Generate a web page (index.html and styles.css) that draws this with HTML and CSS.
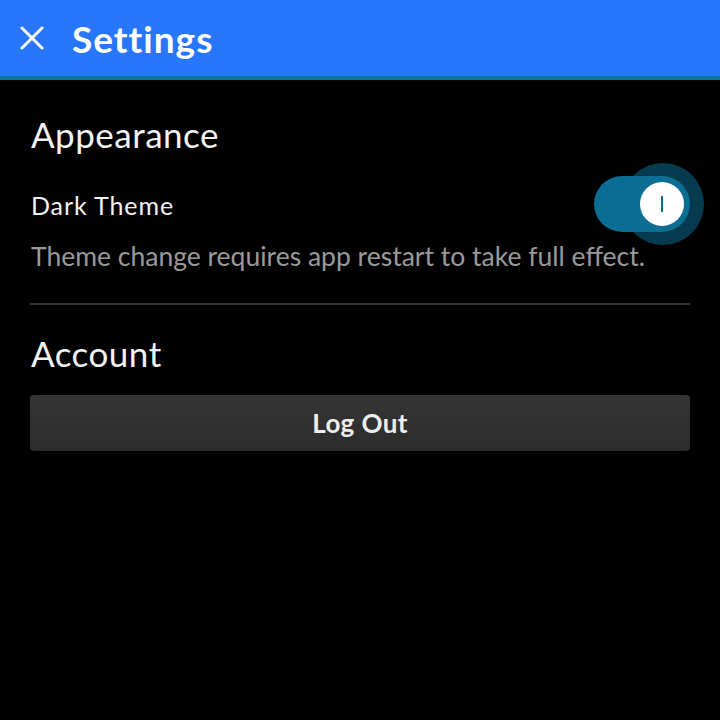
FILE: index.html
```html
<!DOCTYPE html>
<html>
<head>
<meta charset="utf-8">
<link rel="stylesheet" href="styles.css">
</head>
<body>
<header class="titlebar">
  <span class="close-btn">
    <svg width="24" height="24" viewBox="0 0 24 24"><path d="M2 2 L22 22 M22 2 L2 22" stroke="#fff" stroke-width="3" stroke-linecap="round" fill="none"/></svg>
  </span>
  <h1 class="title">Settings</h1>
</header>
<main class="content">
  <h2 class="section-title first">Appearance</h2>
  <div class="setting-row">
    <span class="setting-label">Dark Theme</span>
    <span class="switch">
      <span class="switch-halo"></span>
      <span class="switch-track"></span>
      <span class="switch-knob"><span class="knob-mark"></span></span>
    </span>
  </div>
  <p class="setting-note">Theme change requires app restart to take full effect.</p>
  <hr class="divider">
  <h2 class="section-title">Account</h2>
  <button class="logout-btn">Log Out</button>
</main>
</body>
</html>
```
FILE: styles.css
```css
html, body {
  margin: 0;
  padding: 0;
  background: #000;
  font-family: "Lato", "Liberation Sans", sans-serif;
  color: #f2f2f2;
}
.titlebar {
  height: 76px;
  background: #2776fb;
  border-bottom: 4px solid #07799a;
  display: flex;
  align-items: center;
  padding-left: 20px;
}
.close-btn {
  width: 24px;
  height: 24px;
  display: flex;
  margin-right: 28px;
}
.title {
  margin: 0;
  font-size: 37px;
  font-weight: 700;
  letter-spacing: 1px;
  color: #fff;
  line-height: 40px;
  padding-top: 2px;
}
.content {
  padding: 0 30px;
}
.section-title {
  margin: 28.5px 0 0;
  font-size: 35px;
  font-weight: 400;
  letter-spacing: 0.5px;
  line-height: 40px;
  padding-left: 1px;
}
.section-title.first {
  margin-top: 33.5px;
}
.setting-row {
  margin-top: 22px;
  height: 56px;
  display: flex;
  align-items: center;
  justify-content: space-between;
}
.setting-label {
  font-size: 25px;
  letter-spacing: 0.9px;
  padding-left: 1px;
  padding-top: 2px;
}
.switch {
  position: relative;
  width: 96px;
  height: 56px;
}
.switch-track {
  position: absolute;
  left: 0;
  top: 0;
  width: 96px;
  height: 56px;
  border-radius: 28px;
  background: #0a6d91;
}
.switch-halo {
  position: absolute;
  left: 28px;
  top: -13px;
  width: 82px;
  height: 82px;
  border-radius: 50%;
  background: #063a4f;
}
.switch-knob {
  position: absolute;
  left: 46px;
  top: 6px;
  width: 44px;
  height: 44px;
  border-radius: 50%;
  background: #fff;
  display: flex;
  align-items: center;
  justify-content: center;
}
.knob-mark {
  width: 2px;
  height: 16px;
  background: #0a6d91;
}
.setting-note {
  margin: 9px 0 0;
  font-size: 26.5px;
  line-height: 30px;
  color: #9a9a9a;
  padding-left: 1px;
}
.divider {
  margin: 32px 0 0;
  border: 0;
  height: 2px;
  background: #343434;
}
.logout-btn {
  display: block;
  width: 100%;
  margin-top: 21.5px;
  height: 56px;
  border: 0;
  border-radius: 4px;
  background: linear-gradient(#353535, #2c2c2c);
  color: #eeeeee;
  font-family: "Lato", "Liberation Sans", sans-serif;
  font-size: 26px;
  letter-spacing: 0.4px;
  font-weight: 700;
}
```
